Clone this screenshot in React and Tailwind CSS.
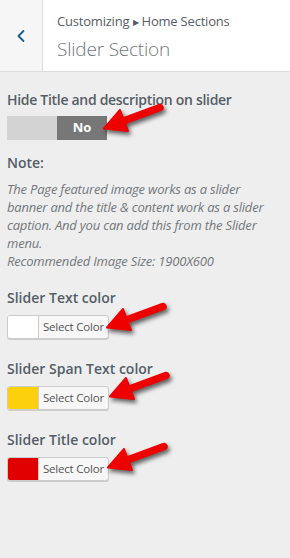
import { ChevronLeft } from 'lucide-react';

function Arrow({ className }) {
  return (
    <svg
      width="64"
      height="38"
      viewBox="0 0 64 38"
      className={`absolute drop-shadow-[2px_3px_2px_rgba(0,0,0,0.6)] ${className}`}
    >
      <line x1="20" y1="20.5" x2="58" y2="6.5" stroke="#ee0000" strokeWidth="7.5" strokeLinecap="round" />
      <polygon points="2,27.5 26,30 18,9" fill="#ee0000" stroke="#ee0000" strokeWidth="2" strokeLinejoin="round" />
    </svg>
  );
}

function ColorControl({ label, swatch, className }) {
  return (
    <div className={className}>
      <div className="h-5 text-[14px] leading-5 font-semibold text-[#555d66]">{label}</div>
      <div className="mt-[7px] flex h-6 w-[102px] overflow-hidden rounded-[3px] border border-[#cccccc] bg-[#f7f7f7] shadow-[0_1px_0_#ccc]">
        <div className={`w-[31px] shrink-0 border-r border-[#cccccc] ${swatch}`} />
        <div className="flex flex-1 items-center justify-center text-[11.5px] tracking-[-0.2px] text-[#555]">Select Color</div>
      </div>
    </div>
  );
}

export default function App() {
  return (
    <div
      className="relative min-h-[558px] w-[290px] bg-[#eeeeee]"
      style={{ fontFamily: '"Open Sans", "Noto Sans", sans-serif' }}
    >
      <div className="flex h-[72px] border-b border-[#dddddd] bg-white">
        <div className="flex w-[43px] shrink-0 items-center justify-center border-r border-[#dddddd] bg-[#f6f6f6]">
          <ChevronLeft className="h-[20px] w-[20px] text-[#135e8c]" strokeWidth={2.2} />
        </div>
        <div className="flex flex-col pl-[14px] pt-[11px]">
          <div className="text-[13px] leading-5 tracking-[-0.2px] text-[#555d66]">
            Customizing <span className="text-[8px] align-[1px]">▶</span> Home Sections
          </div>
          <div className="mt-[5px] text-[19px] leading-6 font-light tracking-[-0.2px] text-[#72777c]">Slider Section</div>
        </div>
      </div>

      <div className="px-[7px]">
        <div className="mt-[18px] h-5 text-[14px] leading-5 font-semibold tracking-[-0.3px] text-[#555d66]">
          Hide Title and description on slider
        </div>
        <div className="mt-[6px] flex h-6 w-[100px]">
          <div className="w-[50px] bg-[#d3d3d3]" />
          <div className="flex w-[50px] items-center justify-center bg-[#777777] text-[13px] font-bold text-white">No</div>
        </div>

        <div className="mt-[13px] h-5 text-[14px] leading-5 font-semibold text-[#555d66]">Note:</div>
        <p className="mt-[7px] text-[13px] leading-[18px] italic tracking-[-0.2px] text-[#72777c]">
          The Page featured image works as a slider banner and the title &amp; content work as a slider caption. And you can add this from the Slider menu.
          <br />
          Recommended Image Size: 1900X600
        </p>

        <ColorControl className="mt-[18px]" label="Slider Text color" swatch="bg-white" />
        <ColorControl className="mt-[20px]" label="Slider Span Text color" swatch="bg-[#fdd00e]" />
        <ColorControl className="mt-[20px]" label="Slider Title color" swatch="bg-[#e00000]" />
      </div>

      <Arrow className="left-[102px] top-[101px]" />
      <Arrow className="left-[105px] top-[300px]" />
      <Arrow className="left-[108px] top-[369px]" />
      <Arrow className="left-[106px] top-[440px]" />
    </div>
  );
}
